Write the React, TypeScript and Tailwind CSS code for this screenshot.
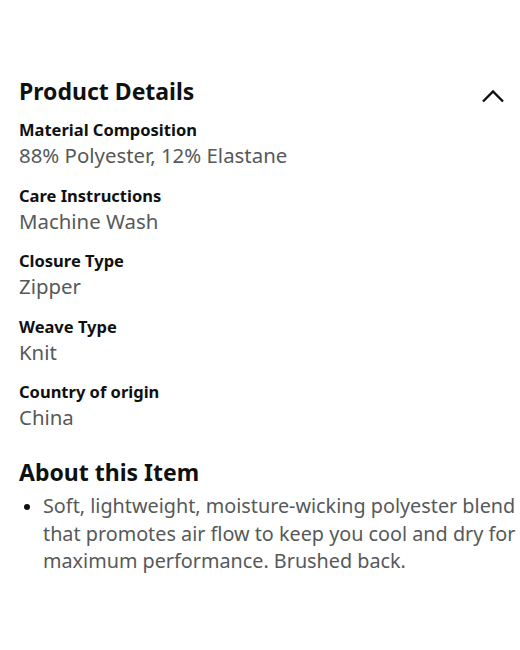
import React from 'react';

const details = [
  { label: 'Material Composition', value: '88% Polyester, 12% Elastane' },
  { label: 'Care Instructions', value: 'Machine Wash' },
  { label: 'Closure Type', value: 'Zipper' },
  { label: 'Weave Type', value: 'Knit' },
  { label: 'Country of origin', value: 'China' },
];

const App: React.FC = () => {
  return (
    <div
      className="min-h-[650px] w-[520px] bg-white px-[19px] pt-[74px] text-[#0f1111]"
      style={{ fontFamily: '"Noto Sans", "Open Sans", sans-serif' }}
    >
      <div className="flex items-center justify-between">
        <h2 className="text-[23px] font-bold leading-[34px]">Product Details</h2>
        <svg
          className="mr-[-4px] mt-[10px] h-[24px] w-[24px]"
          viewBox="0 0 24 24"
          fill="none"
          stroke="#0f1111"
          strokeWidth="2.4"
        >
          <path d="M2 17.5 L12 7.5 L22 17.5" />
        </svg>
      </div>

      <dl className="mt-[9px] flex flex-col gap-[13.5px]">
        {details.map((d) => (
          <div key={d.label} className="flex flex-col">
            <dt className="text-[16.5px] font-bold leading-[25px]">{d.label}</dt>
            <dd className="text-[20.4px] leading-[27px] text-[#565959]">{d.value}</dd>
          </div>
        ))}
      </dl>

      <h2 className="mt-[24px] text-[23px] font-bold leading-[34px]">About this Item</h2>
      <ul className="mr-[-16px] mt-[3px] pl-[24px]">
        <li className="relative text-[19.8px] leading-[27.5px] text-[#565959]">
          <span className="absolute left-[-19px] top-[12px] h-[6px] w-[6px] rounded-full bg-[#0f1111]" />
          Soft, lightweight, moisture-wicking polyester blend that promotes air flow to keep you
          cool and dry for maximum performance. Brushed back.
        </li>
      </ul>
    </div>
  );
};

export default App;
